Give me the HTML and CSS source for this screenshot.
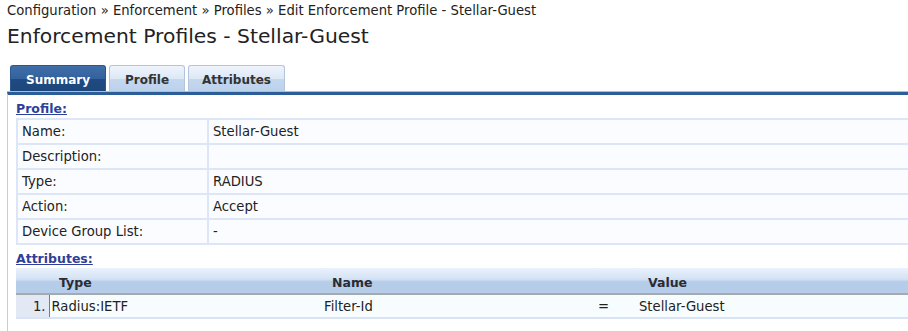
FILE: index.html
```html
<!doctype html>
<html lang="en">
<head>
    <meta charset="UTF-8">
    <title>Enforcement Profiles - Stellar-Guest</title>
    <link rel="stylesheet" href="styles.css">
</head>
<body>

<div class="breadcrumb">Configuration &raquo; Enforcement &raquo; Profiles &raquo; Edit Enforcement Profile - Stellar-Guest</div>
<h1 class="page-title">Enforcement Profiles - Stellar-Guest</h1>

<div class="tabs">
    <a href="#" class="tab tab-active">Summary</a>
    <a href="#" class="tab">Profile</a>
    <a href="#" class="tab">Attributes</a>
</div>

<div class="panel">
    <a href="#" class="section-link">Profile:</a>
    <table class="summary">
        <tr><td class="label">Name:</td><td>Stellar-Guest</td></tr>
        <tr><td class="label">Description:</td><td></td></tr>
        <tr><td class="label">Type:</td><td>RADIUS</td></tr>
        <tr><td class="label">Action:</td><td>Accept</td></tr>
        <tr><td class="label">Device Group List:</td><td>-</td></tr>
    </table>

    <a href="#" class="section-link">Attributes:</a>
    <table class="attrs">
        <thead>
            <tr>
                <th class="num"></th>
                <th class="col-type">Type</th>
                <th class="col-name">Name</th>
                <th class="col-op"></th>
                <th class="col-value">Value</th>
            </tr>
        </thead>
        <tbody>
            <tr>
                <td class="num">1.</td>
                <td class="col-type">Radius:IETF</td>
                <td class="col-name">Filter-Id</td>
                <td class="col-op">=</td>
                <td class="col-value">Stellar-Guest</td>
            </tr>
        </tbody>
    </table>
</div>

</body>
</html>
```

FILE: styles.css
```css
* {
    margin: 0;
    padding: 0;
    box-sizing: border-box;
}
body {
    margin: 0;
    padding: 0 0 0 7px;
    font-family: "DejaVu Sans", Verdana, sans-serif;
    font-size: 13.2px;
    color: #222;
    background: #fff;
}
.breadcrumb {
    padding-top: 3px;
    height: 22px;
    font-size: 13.2px;
    color: #222;
}
.page-title {
    font-size: 20.3px;
    font-weight: normal;
    color: #222;
    height: 43px;
    line-height: 28px;
}
.tabs {
    display: flex;
    gap: 3px;
    padding-left: 3px;
    height: 27px;
    border-bottom: 1px solid #b8bcc4;
}
.tab {
    display: block;
    height: 26px;
    line-height: 28px;
    padding: 0;
    text-align: center;
    font-weight: bold;
    font-size: 12px;
    color: #333;
    text-decoration: none;
    border: 1px solid #b4c4dc;
    border-bottom: none;
    border-radius: 3px 3px 0 0;
    background: linear-gradient(#eef4fc 0%, #dde8f6 50%, #c4d8ee 51%, #bcd2ec 100%);
}
.tab-active {
    width: 96px;
    color: #fff;
    border-color: #2c5690;
    background: linear-gradient(#3f6ea9 0%, #33629d 50%, #1f4b82 51%, #1d477c 100%);
}
.tab:nth-child(2) { width: 76px; }
.tab:nth-child(3) { width: 97px; }
.panel {
    border-top: 3px solid #2b5d98;
    border-left: 1px solid #c4cbe8;
    padding: 5px 0 16px 8px;
    min-height: 240px;
}
.section-link {
    display: block;
    font-weight: bold;
    font-size: 12.5px;
    color: #2e3f9a;
    text-decoration: underline;
    height: 18px;
    line-height: 17px;
}
.section-link:visited { color: #2e3f9a; }
table {
    width: 100%;
    border-collapse: collapse;
}
.summary {
    margin-bottom: 5px;
}
.summary td {
    height: 25px;
    padding: 0 4px;
    border: 2px solid #dce6f6;
    background: #fbfcff;
    vertical-align: middle;
}
.summary td.label {
    width: 191px;
}
.summary tr td:last-child {
    border-right: none;
}
.attrs th {
    height: 26px;
    font-weight: bold;
    font-size: 12.5px;
    color: #2b2b33;
    text-align: left;
    padding-top: 4px;
    border-bottom: 2px solid #a6a9ae;
    background: linear-gradient(#eaf2fc 0%, #d3e2f4 45%, #b5cde9 55%, #b5cde9 100%);
}
.attrs td {
    height: 24px;
    background: #f7fdff;
    border-bottom: 2px solid #dae3f4;
    vertical-align: middle;
}
.attrs .num {
    width: 33px;
}
.attrs td.num {
    text-align: right;
    padding-right: 3px;
    background: #e2e8f4;
    border-right: 1px solid #7c7c7c;
}
.attrs .col-type {
    width: 275px;
    padding-left: 2px;
}
.attrs th.col-type {
    padding-left: 10px;
}
.attrs .col-name {
    width: 274px;
    padding-left: 0;
}
.attrs th.col-name {
    padding-left: 8px;
}
.attrs .col-op {
    width: 41px;
}
.attrs td.col-op {
    padding-left: 0;
}
.attrs th.col-value {
    padding-left: 9px;
}
```
